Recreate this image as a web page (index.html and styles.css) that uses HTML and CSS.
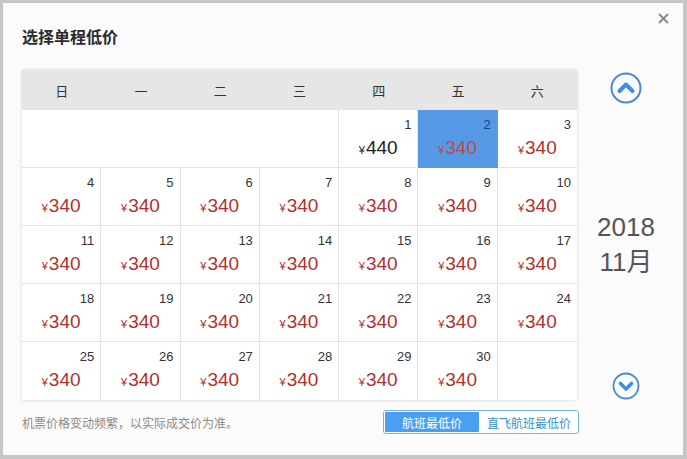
FILE: index.html
```html
<!DOCTYPE html>
<html lang="zh">
<head>
<meta charset="utf-8">
<link rel="stylesheet" href="styles.css">
</head>
<body>
<div class="dialog">
  <button class="close" aria-label="关闭">
    <svg width="11" height="11" viewBox="0 0 11 11"><path d="M1 1L10 10M10 1L1 10" stroke="#8a8a8a" stroke-width="2"/></svg>
  </button>
  <h1 class="title">选择单程低价</h1>
  <div class="main">
    <div class="left">
      <div class="calendar">
        <div class="wk">日</div><div class="wk">一</div><div class="wk">二</div><div class="wk">三</div><div class="wk">四</div><div class="wk">五</div><div class="wk last">六</div>

        <div class="cell empty span4"></div>
        <div class="cell"><span class="d">1</span><span class="p black"><i>¥</i>440</span></div>
        <div class="cell sel"><span class="d">2</span><span class="p"><i>¥</i>340</span></div>
        <div class="cell last"><span class="d">3</span><span class="p"><i>¥</i>340</span></div>

        <div class="cell"><span class="d">4</span><span class="p"><i>¥</i>340</span></div>
        <div class="cell"><span class="d">5</span><span class="p"><i>¥</i>340</span></div>
        <div class="cell"><span class="d">6</span><span class="p"><i>¥</i>340</span></div>
        <div class="cell"><span class="d">7</span><span class="p"><i>¥</i>340</span></div>
        <div class="cell"><span class="d">8</span><span class="p"><i>¥</i>340</span></div>
        <div class="cell"><span class="d">9</span><span class="p"><i>¥</i>340</span></div>
        <div class="cell last"><span class="d">10</span><span class="p"><i>¥</i>340</span></div>

        <div class="cell"><span class="d">11</span><span class="p"><i>¥</i>340</span></div>
        <div class="cell"><span class="d">12</span><span class="p"><i>¥</i>340</span></div>
        <div class="cell"><span class="d">13</span><span class="p"><i>¥</i>340</span></div>
        <div class="cell"><span class="d">14</span><span class="p"><i>¥</i>340</span></div>
        <div class="cell"><span class="d">15</span><span class="p"><i>¥</i>340</span></div>
        <div class="cell"><span class="d">16</span><span class="p"><i>¥</i>340</span></div>
        <div class="cell last"><span class="d">17</span><span class="p"><i>¥</i>340</span></div>

        <div class="cell"><span class="d">18</span><span class="p"><i>¥</i>340</span></div>
        <div class="cell"><span class="d">19</span><span class="p"><i>¥</i>340</span></div>
        <div class="cell"><span class="d">20</span><span class="p"><i>¥</i>340</span></div>
        <div class="cell"><span class="d">21</span><span class="p"><i>¥</i>340</span></div>
        <div class="cell"><span class="d">22</span><span class="p"><i>¥</i>340</span></div>
        <div class="cell"><span class="d">23</span><span class="p"><i>¥</i>340</span></div>
        <div class="cell last"><span class="d">24</span><span class="p"><i>¥</i>340</span></div>

        <div class="cell bottom"><span class="d">25</span><span class="p"><i>¥</i>340</span></div>
        <div class="cell bottom"><span class="d">26</span><span class="p"><i>¥</i>340</span></div>
        <div class="cell bottom"><span class="d">27</span><span class="p"><i>¥</i>340</span></div>
        <div class="cell bottom"><span class="d">28</span><span class="p"><i>¥</i>340</span></div>
        <div class="cell bottom"><span class="d">29</span><span class="p"><i>¥</i>340</span></div>
        <div class="cell bottom"><span class="d">30</span><span class="p"><i>¥</i>340</span></div>
        <div class="cell bottom last empty"></div>
      </div>
      <div class="foot">
        <p class="note">机票价格变动频繁，以实际成交价为准。</p>
        <div class="toggle">
          <span class="opt on">航班最低价</span>
          <span class="opt">直飞航班最低价</span>
        </div>
      </div>
    </div>
    <div class="side">
      <button class="arrow" aria-label="上一月">
        <svg width="32" height="32" viewBox="0 0 32 32"><circle cx="16" cy="16" r="14.5" fill="none" stroke="#4a8ad0" stroke-width="2"/><path d="M9.5 19L16 12.5L22.5 19" fill="none" stroke="#3d8fe3" stroke-width="4" stroke-linecap="round" stroke-linejoin="round"/></svg>
      </button>
      <div class="month"><span>2018</span><span>11月</span></div>
      <button class="arrow" aria-label="下一月">
        <svg width="28" height="28" viewBox="0 0 28 28"><circle cx="14" cy="14" r="12.5" fill="none" stroke="#4a8ad0" stroke-width="1.8"/><path d="M8.5 11.5L14 17L19.5 11.5" fill="none" stroke="#3d8fe3" stroke-width="3.6" stroke-linecap="round" stroke-linejoin="round"/></svg>
      </button>
    </div>
  </div>
</div>
</body>
</html>
```
FILE: styles.css
```css
* { box-sizing: border-box; }
html, body { margin: 0; padding: 0; }
body {
  width: 687px;
  height: 459px;
  background: #c6c6c6;
  padding: 3px 4px 4px 3px;
  font-family: "Liberation Sans", "Noto Sans CJK SC", sans-serif;
  color: #333;
}
.dialog {
  position: relative;
  height: 452px;
  background: #fbfbfb;
  padding: 22px 0 0 19px;
}
.close {
  position: absolute;
  right: 14px;
  top: 10px;
  border: 0;
  background: none;
  padding: 0;
  width: 11px;
  height: 11px;
  display: flex;
}
.title {
  margin: 0;
  font-size: 16px;
  font-weight: bold;
  line-height: 23px;
  height: 23px;
  color: #2a2a2a;
  font-family: "Noto Sans CJK SC", sans-serif;
}
.main {
  display: flex;
  margin-top: 22px;
}
.left { width: 555px; }
.calendar {
  display: grid;
  grid-template-columns: repeat(7, 1fr);
  grid-template-rows: 40px repeat(5, 58px);
  background: #fff;
  box-shadow: 0 0 3px rgba(0,0,0,0.18);
  width: 555px;
}
.wk {
  background: #e6e6e6;
  display: flex;
  align-items: center;
  justify-content: center;
  font-size: 13px;
  color: #333;
  font-family: "Noto Sans CJK SC", sans-serif;
}
.cell {
  position: relative;
  border-right: 1px solid #e3e3e3;
  border-bottom: 1px solid #e3e3e3;
  display: flex;
  flex-direction: column;
  align-items: center;
}
.cell.last { border-right: 0; }
.cell.bottom { border-bottom: 0; }
.cell.span4 { grid-column: span 4; }
.cell.sel { background: #5599e4; border-color: #5599e4; }
.d {
  align-self: flex-end;
  font-size: 13px;
  line-height: 14px;
  margin: 8px 6px 0 0;
  color: #333;
}
.sel .d { color: #15467e; }
.p {
  font-size: 19px;
  line-height: 20px;
  margin-top: 6px;
  color: #b2302d;
  font-family: "Liberation Sans", "Noto Sans CJK SC", sans-serif;
}
.p i {
  font-style: normal;
  font-size: 11px;
  margin-right: 1px;
}
.p.black { color: #222; }
.sel .p { color: #c24949; }
.foot {
  display: flex;
  align-items: center;
  justify-content: space-between;
  margin-top: 10px;
}
.note {
  margin: 0;
  font-size: 12px;
  color: #8a8a8a;
  font-family: "Noto Sans CJK SC", sans-serif;
}
.toggle {
  display: flex;
  border: 1px solid #78b3df;
  border-radius: 3px;
  height: 24px;
  width: 196px;
  margin-right: -2px;
  overflow: hidden;
  background: #fff;
}
.opt {
  display: flex;
  align-items: center;
  justify-content: center;
  font-size: 12px;
  color: #3b8fc4;
  flex: 1;
  font-family: "Noto Sans CJK SC", sans-serif;
}
.opt.on {
  flex: 0 0 96px;
  background: #4b9ff0;
  color: #fff;
  border: 1px solid #fff;
  border-radius: 2px;
}
.side {
  flex: 1;
  display: flex;
  flex-direction: column;
  align-items: center;
  padding-right: 8px;
}
.arrow {
  border: 0;
  background: none;
  padding: 0;
  display: flex;
}
.arrow:first-child { margin-top: 2px; }
.arrow:last-child { margin-top: 92px; }
.month {
  margin-top: 106px;
  display: flex;
  flex-direction: column;
  align-items: center;
  font-size: 26px;
  line-height: 35px;
  color: #555;
  font-family: "Liberation Sans", "Noto Sans CJK SC", sans-serif;
}
```
